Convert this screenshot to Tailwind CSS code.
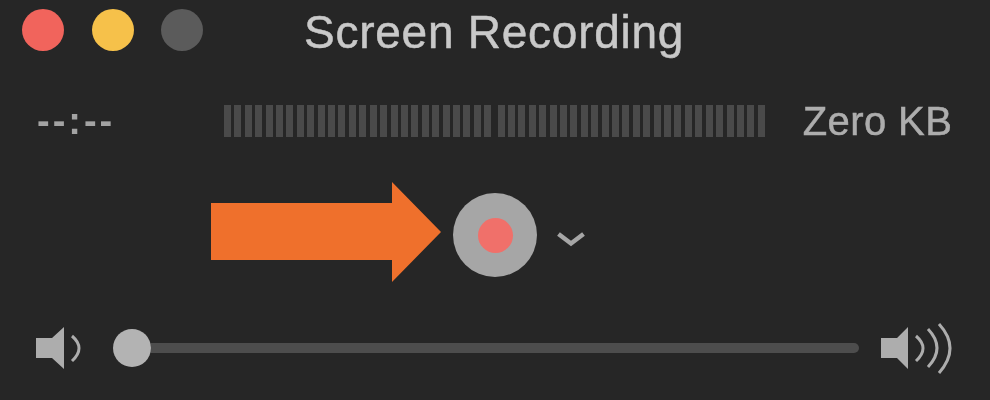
<!DOCTYPE html>
<html lang="en">

<head>
    <meta charset="UTF-8">
    <title>Screen Recording</title>
    <script src="https://cdn.jsdelivr.net/npm/@tailwindcss/browser@4"></script>
</head>

<body class="bg-[#262626] overflow-hidden font-['Liberation_Sans',Arial,sans-serif]">
    <div class="w-[990px] h-[400px] flex flex-col blur-[0.6px]">
        <!-- Title bar -->
        <div class="h-[60px] flex items-center pl-[22px] shrink-0">
            <span class="w-[42px] h-[42px] rounded-full bg-[#f1645c]"></span>
            <span class="w-[42px] h-[42px] rounded-full bg-[#f6c14a] ml-[28px]"></span>
            <span class="w-[42px] h-[42px] rounded-full bg-[#5b5b5b] ml-[27px]"></span>
            <h1 class="ml-[101px] mt-[3px] text-[46px] leading-none tracking-[0.75px] text-[#c9c9c9] [-webkit-text-stroke:0.5px_#c9c9c9]">Screen Recording</h1>
        </div>

        <!-- Time, level meter, size -->
        <div class="h-[62px] mt-[30px] flex items-center shrink-0">
            <span class="w-[224px] pl-[37px] text-[#a3a3a3] text-[38px] font-bold leading-none tracking-[3px]">--:--</span>
            <div id="meter" class="flex h-[32px] gap-[3.42px]"></div>
            <span class="ml-[38px] text-[40px] leading-none tracking-[0.4px] text-[#adadad] [-webkit-text-stroke:0.5px_#adadad]">Zero KB</span>
        </div>

        <!-- Record button with arrow -->
        <div class="h-[100px] mt-[30px] flex items-start pl-[211px] shrink-0">
            <svg class="w-[231px] h-[100px]" viewBox="0 0 231 100">
                <path d="M0 21H181V0L230 50L181 100V78H0Z" fill="#ef702c" />
            </svg>
            <div class="w-[84px] h-[84px] mt-[11px] ml-[11px] rounded-full bg-[#a6a6a6] flex items-center justify-center">
                <span class="w-[35px] h-[35px] rounded-full bg-[#f0706a]"></span>
            </div>
            <svg class="w-[30px] h-[16px] mt-[49px] ml-[19px]" viewBox="0 0 30 16">
                <path d="M2.5 3L15 12.5L27.5 3" fill="none" stroke="#a6a6a6" stroke-width="4.5" />
            </svg>
        </div>

        <!-- Volume slider -->
        <div class="h-[46px] mt-[43px] flex items-center pl-[36px] shrink-0">
            <svg class="w-[46px] h-[46px]" viewBox="0 0 46 46">
                <path d="M0 13H16L28 2V44L16 33H0Z" fill="#adadad" />
                <path d="M36 11Q50 23 36 36" fill="none" stroke="#adadad" stroke-width="3" />
            </svg>
            <div class="w-[38px] h-[38px] ml-[31px] rounded-full bg-[#b3b3b3] shrink-0"></div>
            <div class="w-[708px] h-[10px] rounded-r-full bg-[#4d4d4d]"></div>
            <svg class="w-[72px] h-[56px] ml-[22px]" viewBox="0 0 72 56">
                <path d="M0 18H16L27 7V49L16 38H0Z" fill="#adadad" />
                <path d="M35 16Q49 28 35 41" fill="none" stroke="#adadad" stroke-width="3" />
                <path d="M47 9Q65 28 47 47" fill="none" stroke="#adadad" stroke-width="3" />
                <path d="M58 4Q80 28 58 53" fill="none" stroke="#adadad" stroke-width="3" />
            </svg>
        </div>
    </div>

    <script>
        // Level meter ticks, two groups of 26
        const meter = document.getElementById('meter');
        for (let i = 0; i < 52; i++) {
            const tick = document.createElement('div');
            tick.className = i === 26 ? 'w-[7px] h-full bg-[#4a4a4a] ml-[3px]' : 'w-[7px] h-full bg-[#4a4a4a]';
            meter.appendChild(tick);
        }
    </script>
</body>

</html>
